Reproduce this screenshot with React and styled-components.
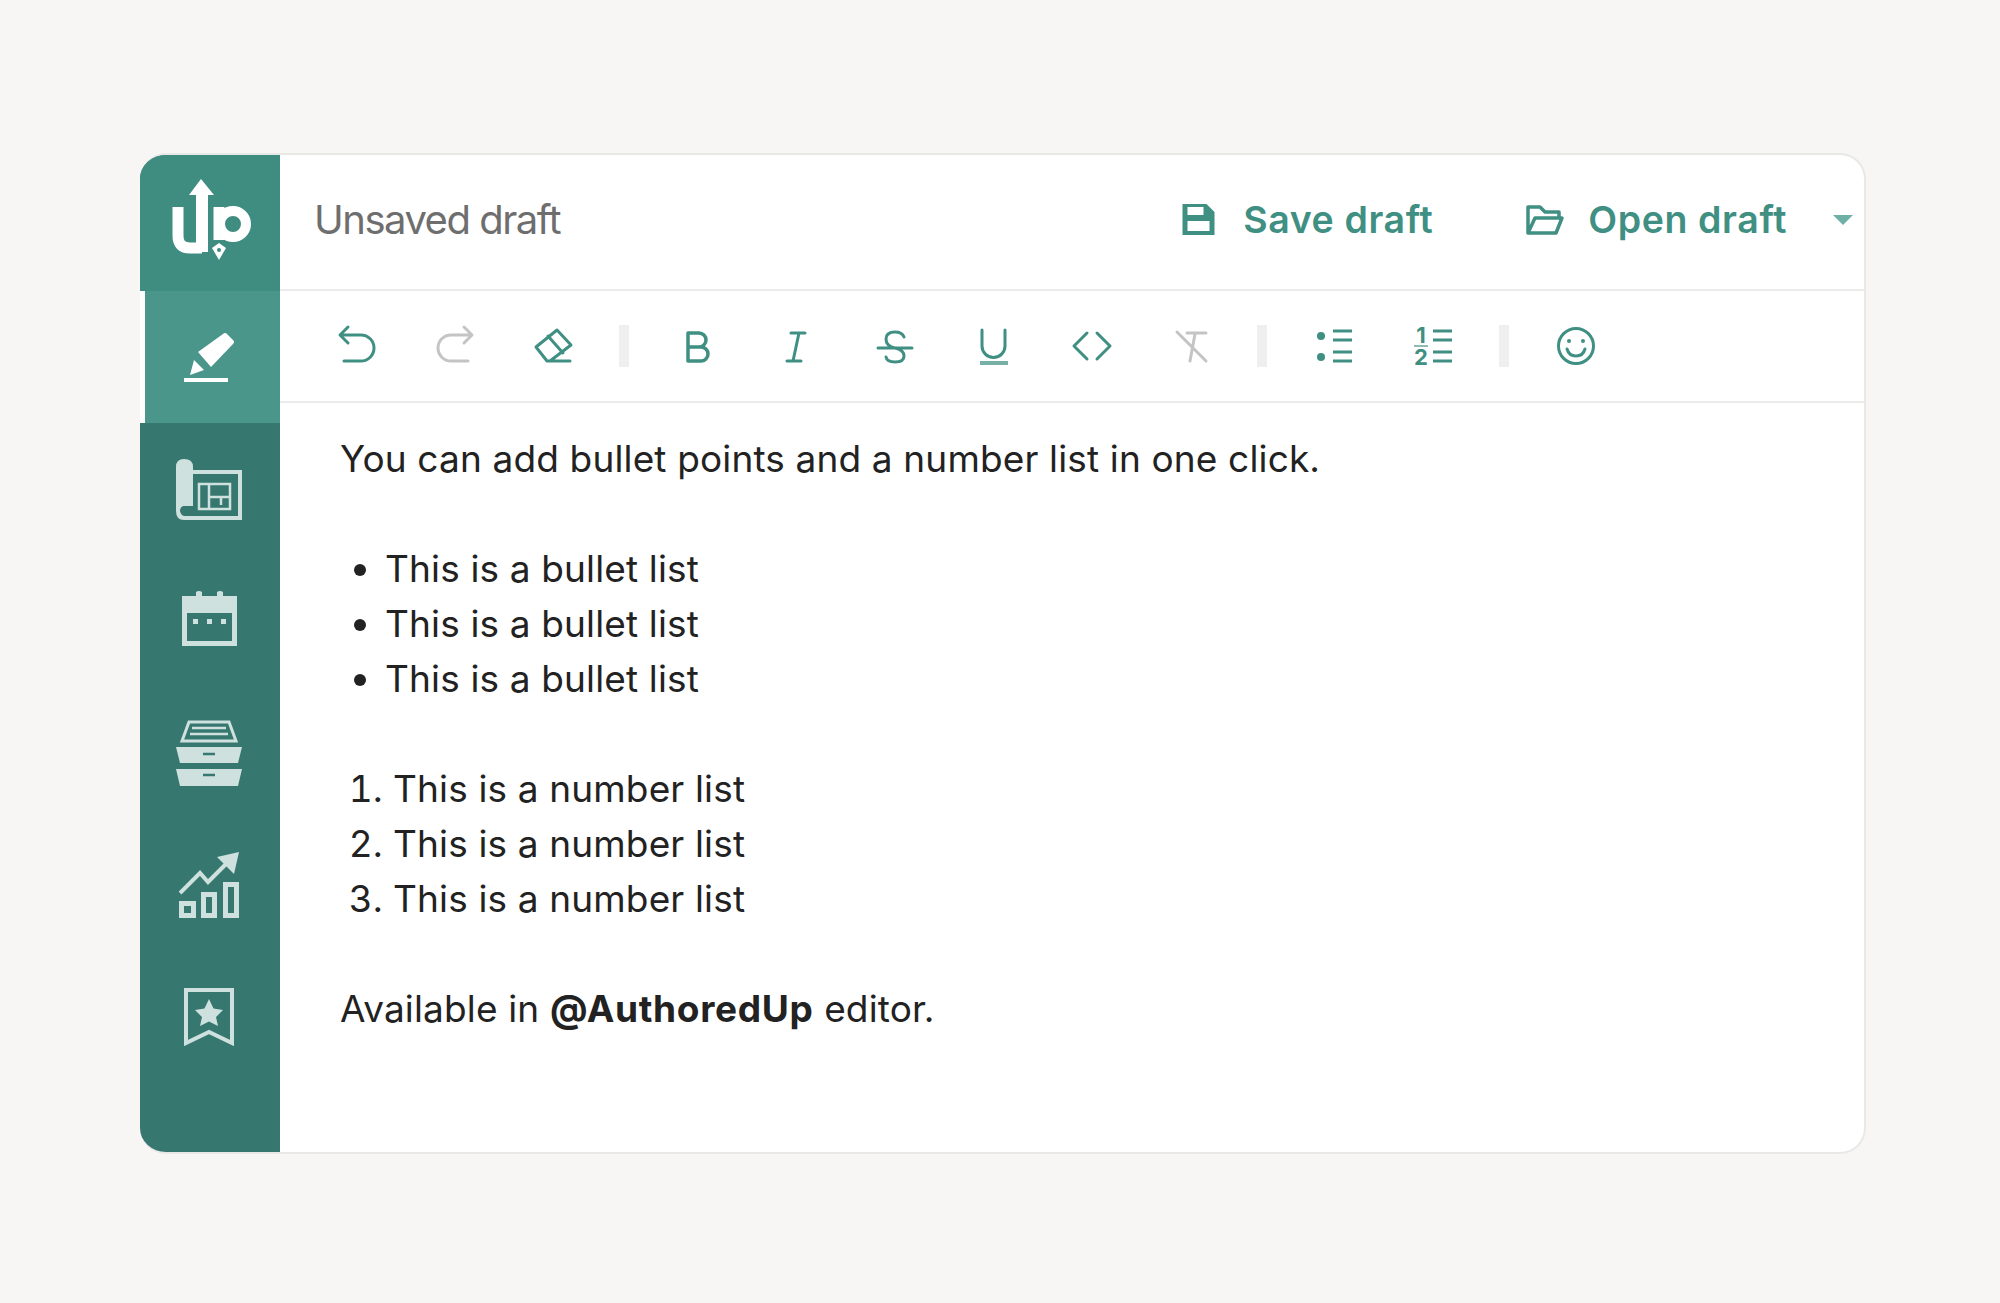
import styled, { createGlobalStyle } from "styled-components";

const GlobalStyle = createGlobalStyle`
  html, body {
    margin: 0;
    background: #f7f6f4;
  }
`;

const Page = styled.div`
  width: 2000px;
  height: 1303px;
  padding: 153px 0 0 140px;
  box-sizing: border-box;
  font-family: Inter, "Liberation Sans", sans-serif;
`;

const Card = styled.div`
  width: 1726px;
  height: 1001px;
  display: flex;
  background: #fff;
  border: 2px solid #e8e8e6;
  border-left: 0;
  border-radius: 26px;
  box-sizing: border-box;
  overflow: hidden;
`;

const Sidebar = styled.nav`
  width: 140px;
  flex: none;
  display: flex;
  flex-direction: column;
  background: #36776f;
  margin: -2px 0;
`;

const LogoBox = styled.div`
  height: 138px;
  flex: none;
  display: flex;
  align-items: center;
  justify-content: center;
  padding: 0 0 3px 4px;
  box-sizing: border-box;
  background: #3f8c80;
`;

const NavItem = styled.div`
  height: 132px;
  flex: none;
  display: flex;
  align-items: center;
  justify-content: center;
  box-sizing: border-box;
  color: ${(props) => (props.$active ? "#fff" : "#cfe1de")};
  background: ${(props) => (props.$active ? "#4a968a" : "transparent")};
  border-left: ${(props) => (props.$active ? "5px solid #fff" : "0")};
  padding-right: ${(props) => (props.$active ? "7px" : "2px")};
  padding-bottom: ${(props) => props.$lift || 0}px;
`;

const Main = styled.div`
  flex: 1;
  min-width: 0;
  display: flex;
  flex-direction: column;
`;

const Header = styled.header`
  height: 136px;
  flex: none;
  display: flex;
  align-items: center;
  padding: 0 11px 5px 34px;
  box-sizing: border-box;
  border-bottom: 2px solid #ebebea;
`;

const DraftTitle = styled.div`
  font-size: 40px;
  letter-spacing: -1.5px;
  color: #6e6e6e;
  margin-right: auto;
`;

const HeaderButton = styled.div`
  display: flex;
  align-items: center;
  gap: ${(props) => props.$gap}px;
  margin-right: ${(props) => props.$after}px;
  font-size: 37.5px;
  font-weight: 600;
  letter-spacing: 0.6px;
  color: #3f8f83;
`;

const Caret = styled.div`
  width: 0;
  height: 0;
  border-left: 10px solid transparent;
  border-right: 10px solid transparent;
  border-top: 10px solid #6fb0a6;
`;

const Toolbar = styled.div`
  height: 112px;
  flex: none;
  display: flex;
  align-items: center;
  padding-left: 25px;
  box-sizing: border-box;
  border-bottom: 2px solid #ebebea;
`;

const ToolButton = styled.div`
  width: 99px;
  flex: none;
  display: flex;
  justify-content: center;
  color: ${(props) => (props.$off ? "#c4c4c4" : "#3f8f83")};
`;

const Separator = styled.div`
  width: 10px;
  height: 42px;
  flex: none;
  margin: 0 17px;
  background: #efefef;
`;

const Content = styled.div`
  padding: 28px 0 0 60px;
  font-size: 37px;
  letter-spacing: 0.15px;
  line-height: 55px;
  color: #222;
`;

const Line = styled.p`
  margin: 0 0 55px;
`;

const Handle = styled.b`
  letter-spacing: 0.7px;
`;

const BulletList = styled.ul`
  margin: 0 0 55px;
  padding-left: 45px;
`;

const NumberList = styled.ol`
  margin: 0 0 55px;
  padding-left: 53px;
`;

const Icon = ({ w = 40, h = 40, children, sw = 3 }) => (
  <svg
    width={w}
    height={h}
    viewBox={`0 0 ${w} ${h}`}
    fill="none"
    stroke="currentColor"
    strokeWidth={sw}
    strokeLinecap="round"
    strokeLinejoin="round"
    overflow="visible"
  >
    {children}
  </svg>
);

const Logo = () => (
  <svg width="80" height="78" viewBox="0 0 80 78" fill="none" stroke="#fff" overflow="visible">
    <path d="M6 25V54Q6 66 18 66H30" strokeWidth="11" />
    <path d="M30 10V70" strokeWidth="12" />
    <path d="M29 -3L42 13H17Z" fill="#fff" stroke="none" />
    <path d="M47 25V58" strokeWidth="11" />
    <circle cx="61" cy="42" r="13" strokeWidth="10" />
    <path d="M40 66L47 61L54 66L47 78Z" fill="#fff" stroke="none" />
    <circle cx="47" cy="68" r="2" fill="#3f8c80" stroke="none" />
  </svg>
);

const sidebarIcons = {
  pen: (
    <svg width="51" height="51" viewBox="0 0 51 51" fill="currentColor">
      <path d="M14 20L39 2Q41 0 43 2L49 8Q51 10 49 12L27 35Z" />
      <path d="M10 28L20 38L6 43Z" />
      <rect x="0" y="46" width="44" height="4" />
    </svg>
  ),
  plan: (
    <svg width="66" height="61" viewBox="0 0 66 61" fill="none" stroke="currentColor">
      <path
        d="M0 8Q0 0 8 0Q17 0 17 8V11H66V61H8Q0 61 0 52ZM17 15V47H7Q4 48 4 52Q5 57 9 57H62V15Z"
        fill="currentColor"
        stroke="none"
        fillRule="evenodd"
      />
      <rect x="23" y="25" width="31" height="25" strokeWidth="2.5" />
      <path d="M33 25V50M33 38H54M45 38V46" strokeWidth="2.5" />
    </svg>
  ),
  calendar: (
    <svg width="55" height="55" viewBox="0 0 55 55" fill="currentColor">
      <path
        fillRule="evenodd"
        d="M0 5H14V1Q17 -1 20 1V5H35V1Q38 -1 41 1V5H55V55H0ZM5 22V50H50V22Z"
      />
      <rect x="11" y="28" width="5" height="5" />
      <rect x="25" y="28" width="5" height="5" />
      <rect x="39" y="28" width="5" height="5" />
    </svg>
  ),
  archive: (
    <svg width="66" height="66" viewBox="0 0 66 66" fill="none" stroke="currentColor">
      <path d="M13 2H53L60 21H6Z" strokeWidth="3" />
      <path d="M16 8H50M14 14H52" strokeWidth="2.5" />
      <path
        d="M0 27H66L62 43H4ZM0 49H66L62 66H4Z"
        fill="currentColor"
        stroke="none"
      />
      <path d="M27 34H39M27 55H39" stroke="#36776f" strokeWidth="2.5" />
    </svg>
  ),
  chart: (
    <svg width="60" height="66" viewBox="0 0 60 66" fill="none" stroke="currentColor">
      <path d="M1 41L21 21L29 30L52 7" strokeWidth="4" />
      <path d="M60 0L38 5L55 22Z" fill="currentColor" stroke="none" />
      <rect x="2.5" y="51.5" width="12" height="12" strokeWidth="5" />
      <rect x="24.5" y="42.5" width="11" height="21" strokeWidth="5" />
      <rect x="46.5" y="32.5" width="11" height="31" strokeWidth="5" />
    </svg>
  ),
  bookmark: (
    <svg width="50" height="58" viewBox="0 0 50 58" fill="none" stroke="currentColor">
      <path d="M2 2H48V55L25 44L2 55Z" strokeWidth="4" />
      <path
        d="M25 11L29.5 20.5L39 22L32 29L34 38L25 33.5L16 38L18 29L11 22L20.5 20.5Z"
        fill="currentColor"
        stroke="none"
      />
    </svg>
  ),
};

const tools = {
  undo: <Icon><path d="M13 1L5 9L13 17M6 9H26A13 13 0 0 1 26 35H9" /></Icon>,
  redo: <Icon><path d="M30 1L38 9L30 17M37 9H17A13 13 0 0 0 17 35H34" /></Icon>,
  eraser: (
    <Icon>
      <path d="M3 21L24 4L38 19L17 35H14ZM15 10L30 27M17 35H37" />
    </Icon>
  ),
  bold: (
    <Icon sw={3.5}>
      <path d="M12 7V35H25A7 7 0 0 0 25 21H12M12 21H23A7 7 0 0 0 23 7H12" />
    </Icon>
  ),
  italic: <Icon><path d="M16 7H30M12 35H26M24 7L18 35" /></Icon>,
  strike: (
    <Icon>
      <path d="M30 11Q28 6 21 6Q12 6 12 13Q12 20 21 22Q30 24 30 30Q30 36 21 36Q13 36 12 31M4 22H38" />
    </Icon>
  ),
  underline: (
    <Icon>
      <path d="M9 4V20A11.5 11.5 0 0 0 32 20V4" />
      <path d="M7 37H35" strokeWidth="4" opacity="0.7" strokeLinecap="butt" />
    </Icon>
  ),
  code: <Icon><path d="M15 7L2 20L15 33M25 7L38 20L25 33" /></Icon>,
  clear: <Icon><path d="M16 7H35M24 8L19 35M6 6L35 35" /></Icon>,
  bullets: (
    <Icon>
      <circle cx="7" cy="10" r="4" fill="currentColor" stroke="none" />
      <circle cx="7" cy="31" r="4" fill="currentColor" stroke="none" />
      <path d="M19 5H38M19 14H38M19 26H38M19 35H38" strokeLinecap="butt" />
    </Icon>
  ),
  numbers: (
    <Icon>
      <text x="8" y="17" textAnchor="middle" fontSize="22" fontWeight="700" fill="currentColor" stroke="none">1</text>
      <text x="8" y="39" textAnchor="middle" fontSize="22" fontWeight="700" fill="currentColor" stroke="none">2</text>
      <path d="M1 20H15" strokeWidth="2" opacity="0.6" strokeLinecap="butt" />
      <path d="M20 5H39M20 14H39M20 26H39M20 35H39" strokeLinecap="butt" />
    </Icon>
  ),
  smile: (
    <Icon>
      <circle cx="20" cy="20" r="17.5" />
      <circle cx="13" cy="15" r="2" fill="currentColor" stroke="none" />
      <circle cx="27" cy="15" r="2" fill="currentColor" stroke="none" />
      <path d="M11 23Q13 30 20 30Q27 30 29 23" />
    </Icon>
  ),
};

const SaveIcon = () => (
  <svg width="33" height="31" viewBox="0 0 32 31" fill="currentColor">
    <path
      fillRule="evenodd"
      d="M0 0H24L32 8V31H0ZM5 3V11H21V3ZM5 17V27H27V17Z"
    />
  </svg>
);

const FolderIcon = () => (
  <Icon w={38} h={31} sw={3.5}>
    <path d="M2 29V3H14L19 8H33V13M2 29H30L36 14H9Z" />
  </Icon>
);

const App = () => (
  <Page>
    <GlobalStyle />
    <Card>
      <Sidebar>
        <LogoBox><Logo /></LogoBox>
        <NavItem $active>{sidebarIcons.pen}</NavItem>
        <NavItem>{sidebarIcons.plan}</NavItem>
        <NavItem $lift={6}>{sidebarIcons.calendar}</NavItem>
        <NavItem>{sidebarIcons.archive}</NavItem>
        <NavItem>{sidebarIcons.chart}</NavItem>
        <NavItem>{sidebarIcons.bookmark}</NavItem>
      </Sidebar>
      <Main>
        <Header>
          <DraftTitle>Unsaved draft</DraftTitle>
          <HeaderButton $gap={28} $after={93}><SaveIcon />Save draft</HeaderButton>
          <HeaderButton $gap={24} $after={46}><FolderIcon />Open draft</HeaderButton>
          <Caret />
        </Header>
        <Toolbar>
          <ToolButton>{tools.undo}</ToolButton>
          <ToolButton $off>{tools.redo}</ToolButton>
          <ToolButton>{tools.eraser}</ToolButton>
          <Separator />
          <ToolButton>{tools.bold}</ToolButton>
          <ToolButton>{tools.italic}</ToolButton>
          <ToolButton>{tools.strike}</ToolButton>
          <ToolButton>{tools.underline}</ToolButton>
          <ToolButton>{tools.code}</ToolButton>
          <ToolButton $off>{tools.clear}</ToolButton>
          <Separator />
          <ToolButton>{tools.bullets}</ToolButton>
          <ToolButton>{tools.numbers}</ToolButton>
          <Separator />
          <ToolButton>{tools.smile}</ToolButton>
        </Toolbar>
        <Content>
          <Line>You can add bullet points and a number list in one click.</Line>
          <BulletList>
            <li>This is a bullet list</li>
            <li>This is a bullet list</li>
            <li>This is a bullet list</li>
          </BulletList>
          <NumberList>
            <li>This is a number list</li>
            <li>This is a number list</li>
            <li>This is a number list</li>
          </NumberList>
          <Line>Available in <Handle>@AuthoredUp</Handle> editor.</Line>
        </Content>
      </Main>
    </Card>
  </Page>
);

export default App;
